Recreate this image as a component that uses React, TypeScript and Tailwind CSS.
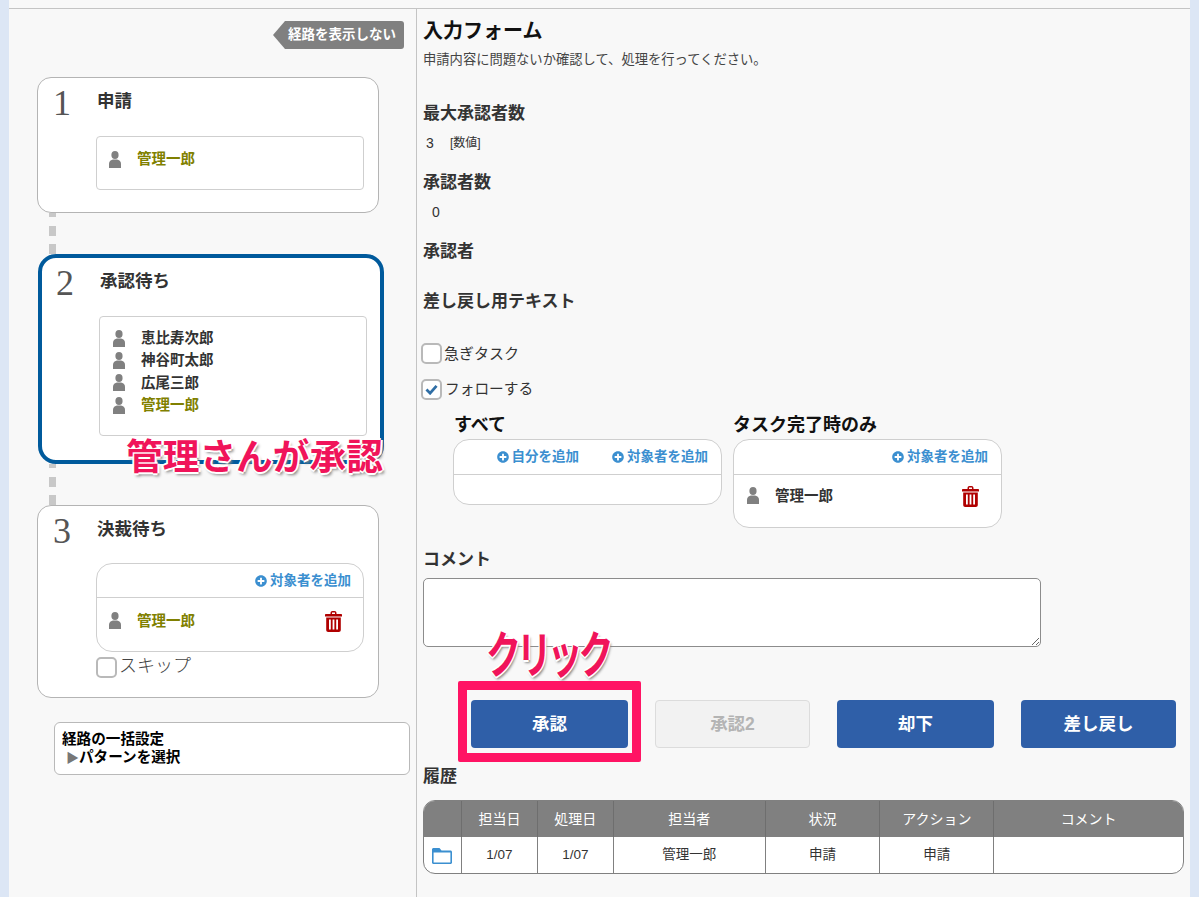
import { FaPlusCircle } from 'react-icons/fa';

const PersonIcon = () => (
    <svg viewBox="0 0 12 17" className="w-[12px] h-[17px] shrink-0" fill="#808080">
        <ellipse cx="6" cy="4" rx="3.6" ry="4" />
        <path d="M0 17V12.5C0 10.2 2 9 4 8.6H8C10 9 12 10.2 12 12.5V17Z" />
    </svg>
);

const TrashIcon = () => (
    <svg viewBox="0 0 17 21" className="w-[17px] h-[21px] shrink-0">
        <path
            fillRule="evenodd"
            fill="#b00000"
            d="M5.5 2.2C5.5 .8 6.3 0 7.5 0H9.5C10.7 0 11.5 .8 11.5 2.2V3H16C16.6 3 17 3.4 17 4V5.5H0V4C0 3.4 .4 3 1 3H5.5ZM7 3H10V1.6H7ZM1.2 6.5H15.8V19C15.8 20.2 15 21 13.8 21H3.2C2 21 1.2 20.2 1.2 19ZM4 8.5V18.5H5.8V8.5ZM7.6 8.5V18.5H9.4V8.5ZM11.2 8.5V18.5H13V8.5Z"
        />
    </svg>
);

const FolderIcon = () => (
    <svg viewBox="0 0 20 16" className="w-[20px] h-[16px]">
        <path
            fill="#3b8fd0"
            fillRule="evenodd"
            d="M1.5 0H7.5L9.5 2.5H18.5C19.3 2.5 20 3.2 20 4V14.5C20 15.3 19.3 16 18.5 16H1.5C.7 16 0 15.3 0 14.5V1.5C0 .7 .7 0 1.5 0ZM1.6 4.6V14.4H18.4V4.6Z"
        />
    </svg>
);

const AddLink = ({ label }: { label: string }) => (
    <span className="flex items-center gap-[3px] text-[13.5px] font-bold text-[#3b8fd0] leading-none">
        <FaPlusCircle className="w-[12px] h-[12px]" />
        {label}
    </span>
);

const Person = ({ name, color, weight }: { name: string; color: string; weight: string }) => (
    <div className="flex items-center h-[22.4px]">
        <PersonIcon />
        <span className={`ml-[16px] text-[14.5px] leading-none ${color} ${weight}`}>{name}</span>
    </div>
);

const Checkbox = ({ checked, label, labelClass }: { checked?: boolean; label: string; labelClass: string }) => (
    <div className="flex items-center">
        <span className="flex items-center justify-center w-[21px] h-[21px] bg-white border-2 border-[#b9b9b9] rounded-[5px]">
            {checked && (
                <svg viewBox="0 0 14 12" className="w-[13px] h-[11px]">
                    <path d="M1.5 6L5.5 10L12.5 2" fill="none" stroke="#2f6ea5" strokeWidth="3" />
                </svg>
            )}
        </span>
        <span className={labelClass}>{label}</span>
    </div>
);

const Dashes = () => (
    <div className="flex flex-col justify-between ml-[12px] w-[7px] h-[41px]">
        <div className="h-[4px] bg-[#c8c8c8]" />
        <div className="h-[10px] bg-[#c8c8c8]" />
        <div className="h-[10px] bg-[#c8c8c8]" />
    </div>
);

const StepHead = ({ no, title }: { no: string; title: string }) => (
    <div className="flex h-[46px]">
        <span className="w-[44px] pl-[15px] font-['Liberation_Serif','Noto_Serif_CJK_JP',serif] text-[36px] font-light leading-[50px] text-[#555]">
            {no}
        </span>
        <span className="pl-[15px] pt-[12px] text-[17.5px] font-bold leading-[22px] text-[#333]">{title}</span>
    </div>
);

const Label = ({ text, className }: { text: string; className: string }) => (
    <div className={`text-[17px] font-bold leading-[22px] text-[#333] ${className}`}>{text}</div>
);

const ActionButton = ({ text, disabled, width }: { text: string; disabled?: boolean; width: string }) => (
    <button
        className={`${width} h-[48px] rounded-[4px] text-[17.5px] font-bold ${
            disabled ? 'bg-[#f2f2f2] border border-[#dcdcdc] text-[#b4b4b4]' : 'bg-[#2f5fa8] text-white'
        }`}
    >
        {text}
    </button>
);

const headers = ['', '担当日', '処理日', '担当者', '状況', 'アクション', 'コメント'];
const widths = ['w-[38px]', 'w-[76px]', 'w-[76px]', 'w-[152px]', 'w-[115px]', 'w-[114px]', 'w-[189px]'];

const App = () => {
    return (
        <div className="relative flex w-[1199px] h-[897px] overflow-hidden bg-[#f8f8f8] font-['Liberation_Sans','Noto_Sans_CJK_JP',sans-serif] text-[#333]">
            <div className="w-[9px] bg-[#dce6f5]" />

            <div className="flex flex-col flex-1 pt-[8px]">
                <div className="flex flex-1 border-t border-[#c4c4c4]">
                    {/* route column */}
                    <div className="w-[408px] pl-[28px] border-r border-[#c4c4c4]">
                        <div className="flex justify-end pt-[12px] pr-[12px]">
                            <div className="w-0 h-0 border-y-[14px] border-r-[12px] border-y-transparent border-r-[#808080]" />
                            <div className="flex items-center h-[28px] pl-[3px] pr-[8px] rounded-r-[3px] bg-[#808080] text-[13.5px] font-bold text-white">
                                経路を表示しない
                            </div>
                        </div>

                        <div className="mt-[28px] w-[342px] h-[136px] bg-white border border-[#b4b4b4] rounded-[14px]">
                            <StepHead no="1" title="申請" />
                            <div className="ml-[58px] mt-[12px] w-[268px] h-[54px] px-[12px] pt-[11px] border border-[#cfcfcf] rounded-[4px]">
                                <Person name="管理一郎" color="text-[#808000]" weight="font-bold" />
                            </div>
                        </div>

                        <Dashes />

                        <div className="ml-[1px] w-[346px] h-[210px] bg-white border-[4px] border-[#005a9c] rounded-[18px]">
                            <div className="-ml-[1px]">
                                <StepHead no="2" title="承認待ち" />
                            </div>
                            <div className="ml-[57px] mt-[12px] w-[268px] h-[120px] px-[13px] pt-[10px] border border-[#cfcfcf] rounded-[4px]">
                                <Person name="恵比寿次郎" color="text-[#333]" weight="font-bold" />
                                <Person name="神谷町太郎" color="text-[#333]" weight="font-bold" />
                                <Person name="広尾三郎" color="text-[#333]" weight="font-bold" />
                                <Person name="管理一郎" color="text-[#808000]" weight="font-bold" />
                            </div>
                        </div>

                        <Dashes />

                        <div className="w-[342px] h-[193px] bg-white border border-[#b4b4b4] rounded-[14px]">
                            <StepHead no="3" title="決裁待ち" />
                            <div className="ml-[58px] mt-[11px] w-[268px] h-[89px] border border-[#cfcfcf] rounded-[16px]">
                                <div className="flex justify-end items-center h-[34px] pr-[12px] border-b border-[#cfcfcf]">
                                    <AddLink label="対象者を追加" />
                                </div>
                                <div className="flex items-center justify-between h-[46px] pl-[12px] pr-[21px]">
                                    <Person name="管理一郎" color="text-[#808000]" weight="font-bold" />
                                    <TrashIcon />
                                </div>
                            </div>
                            <div className="ml-[58px] mt-[5px]">
                                <Checkbox label="スキップ" labelClass="ml-[2px] pb-[3px] text-[18px] leading-none font-light text-[#444]" />
                            </div>
                        </div>

                        <div className="ml-[17px] mt-[24px] w-[356px] h-[53px] pl-[7px] pt-[7px] bg-white border border-[#b9b9b9] rounded-[6px] text-[14.6px] font-bold leading-[18px] text-black">
                            <div>経路の一括設定</div>
                            <div>
                                <span className="text-[#777] text-[13px] pl-[4px]">▶</span>
                                パターンを選択
                            </div>
                        </div>
                    </div>

                    {/* form column */}
                    <div className="flex-1 pl-[6px]">
                        <div className="pt-[10px] text-[20px] font-bold leading-[24px] text-[#111]">入力フォーム</div>
                        <div className="mt-[8px] text-[13.3px] leading-[18px] text-[#444]">
                            申請内容に問題ないか確認して、処理を行ってください。
                        </div>

                        <Label text="最大承認者数" className="mt-[34px]" />
                        <div className="flex items-center mt-[10px] pl-[3px] text-[12px] leading-[16px]">
                            <span className="w-[24px] text-[14px]">3</span>
                            <span>[数値]</span>
                        </div>

                        <Label text="承認者数" className="mt-[21px]" />
                        <div className="mt-[10px] pl-[9px] text-[14px] leading-[16px]">0</div>

                        <Label text="承認者" className="mt-[21px]" />
                        <Label text="差し戻し用テキスト" className="mt-[28px]" />

                        <div className="-ml-[2px] mt-[30px]">
                            <Checkbox label="急ぎタスク" labelClass="ml-[2px] text-[15px] leading-none" />
                        </div>
                        <div className="-ml-[2px] mt-[15px]">
                            <Checkbox checked label="フォローする" labelClass="ml-[3px] text-[14.7px] leading-none" />
                        </div>

                        <div className="flex items-start gap-[11px] ml-[30px] mt-[15px]">
                            <div className="w-[269px]">
                                <div className="pl-[1px] text-[18px] font-bold leading-[20px] text-[#111]">すべて</div>
                                <div className="mt-[4px] h-[66px] bg-white border border-[#cfcfcf] rounded-[16px]">
                                    <div className="flex justify-end items-center gap-[33px] h-[35px] pr-[13px] border-b border-[#cfcfcf]">
                                        <AddLink label="自分を追加" />
                                        <AddLink label="対象者を追加" />
                                    </div>
                                </div>
                            </div>
                            <div className="w-[269px]">
                                <div className="text-[18px] font-bold leading-[20px] text-[#111]">タスク完了時のみ</div>
                                <div className="mt-[4px] h-[89px] bg-white border border-[#cfcfcf] rounded-[16px]">
                                    <div className="flex justify-end items-center h-[35px] pr-[13px] border-b border-[#cfcfcf]">
                                        <AddLink label="対象者を追加" />
                                    </div>
                                    <div className="flex items-center justify-between h-[42px] pl-[13px] pr-[22px]">
                                        <Person name="管理一郎" color="text-[#333]" weight="font-bold" />
                                        <TrashIcon />
                                    </div>
                                </div>
                            </div>
                        </div>

                        <Label text="コメント" className="mt-[21px]" />
                        <textarea className="block mt-[7px] w-[618px] h-[69px] bg-white border border-[#8c8c8c] rounded-[5px]" />

                        <div className="flex gap-[27px] ml-[48px] mt-[53px]">
                            <ActionButton text="承認" width="w-[157px]" />
                            <ActionButton text="承認2" width="w-[155px]" disabled />
                            <ActionButton text="却下" width="w-[157px]" />
                            <ActionButton text="差し戻し" width="w-[155px]" />
                        </div>

                        <div className="mt-[18px] text-[17px] font-bold leading-[22px] text-[#333]">履歴</div>

                        <div className="mt-[12px] w-[761px] h-[74px] overflow-hidden bg-white border border-[#808080] rounded-[12px]">
                            <div className="flex h-[36px] bg-[#808080] text-[14px] text-white">
                                {headers.map((h, i) => (
                                    <div
                                        key={i}
                                        className={`flex items-center justify-center ${widths[i]} ${
                                            i < 6 ? 'border-r border-[#6e6e6e]' : ''
                                        }`}
                                    >
                                        {h}
                                    </div>
                                ))}
                            </div>
                            <div className="flex h-[37px] text-[13.5px]">
                                <div className={`flex items-center justify-center border-r border-[#808080] ${widths[0]}`}>
                                    <FolderIcon />
                                </div>
                                {['1/07', '1/07', '管理一郎', '申請', '申請', ''].map((t, i) => (
                                    <div
                                        key={i}
                                        className={`flex items-center justify-center ${widths[i + 1]} ${
                                            i < 5 ? 'border-r border-[#808080]' : ''
                                        }`}
                                    >
                                        {t}
                                    </div>
                                ))}
                            </div>
                        </div>
                    </div>
                </div>
            </div>

            <div className="w-[9px] bg-[#dce6f5]" />

            {/* annotations drawn over the screen */}
            <div className="absolute left-[126px] top-[434px] text-[36.7px] font-bold leading-[48px] whitespace-nowrap text-[#f0145a] [text-shadow:-2px_0_0_#fff,2px_0_0_#fff,0_-2px_0_#fff,0_2px_0_#fff,2px_3px_3px_#888]">
                管理さんが承認
            </div>
            <div className="absolute left-[486px] top-[626px] origin-left scale-x-[0.7] text-[50px] font-bold leading-[60px] tracking-[-6px] whitespace-nowrap text-[#f0145a] [text-shadow:-2px_0_0_#fff,2px_0_0_#fff,0_-2px_0_#fff,0_2px_0_#fff,2px_3px_3px_#888]">
                クリック
            </div>
            <div className="absolute left-[458px] top-[681px] w-[183px] h-[81px] border-[9px] border-[#ff1464] rounded-[2px]" />
        </div>
    );
};

export default App;
